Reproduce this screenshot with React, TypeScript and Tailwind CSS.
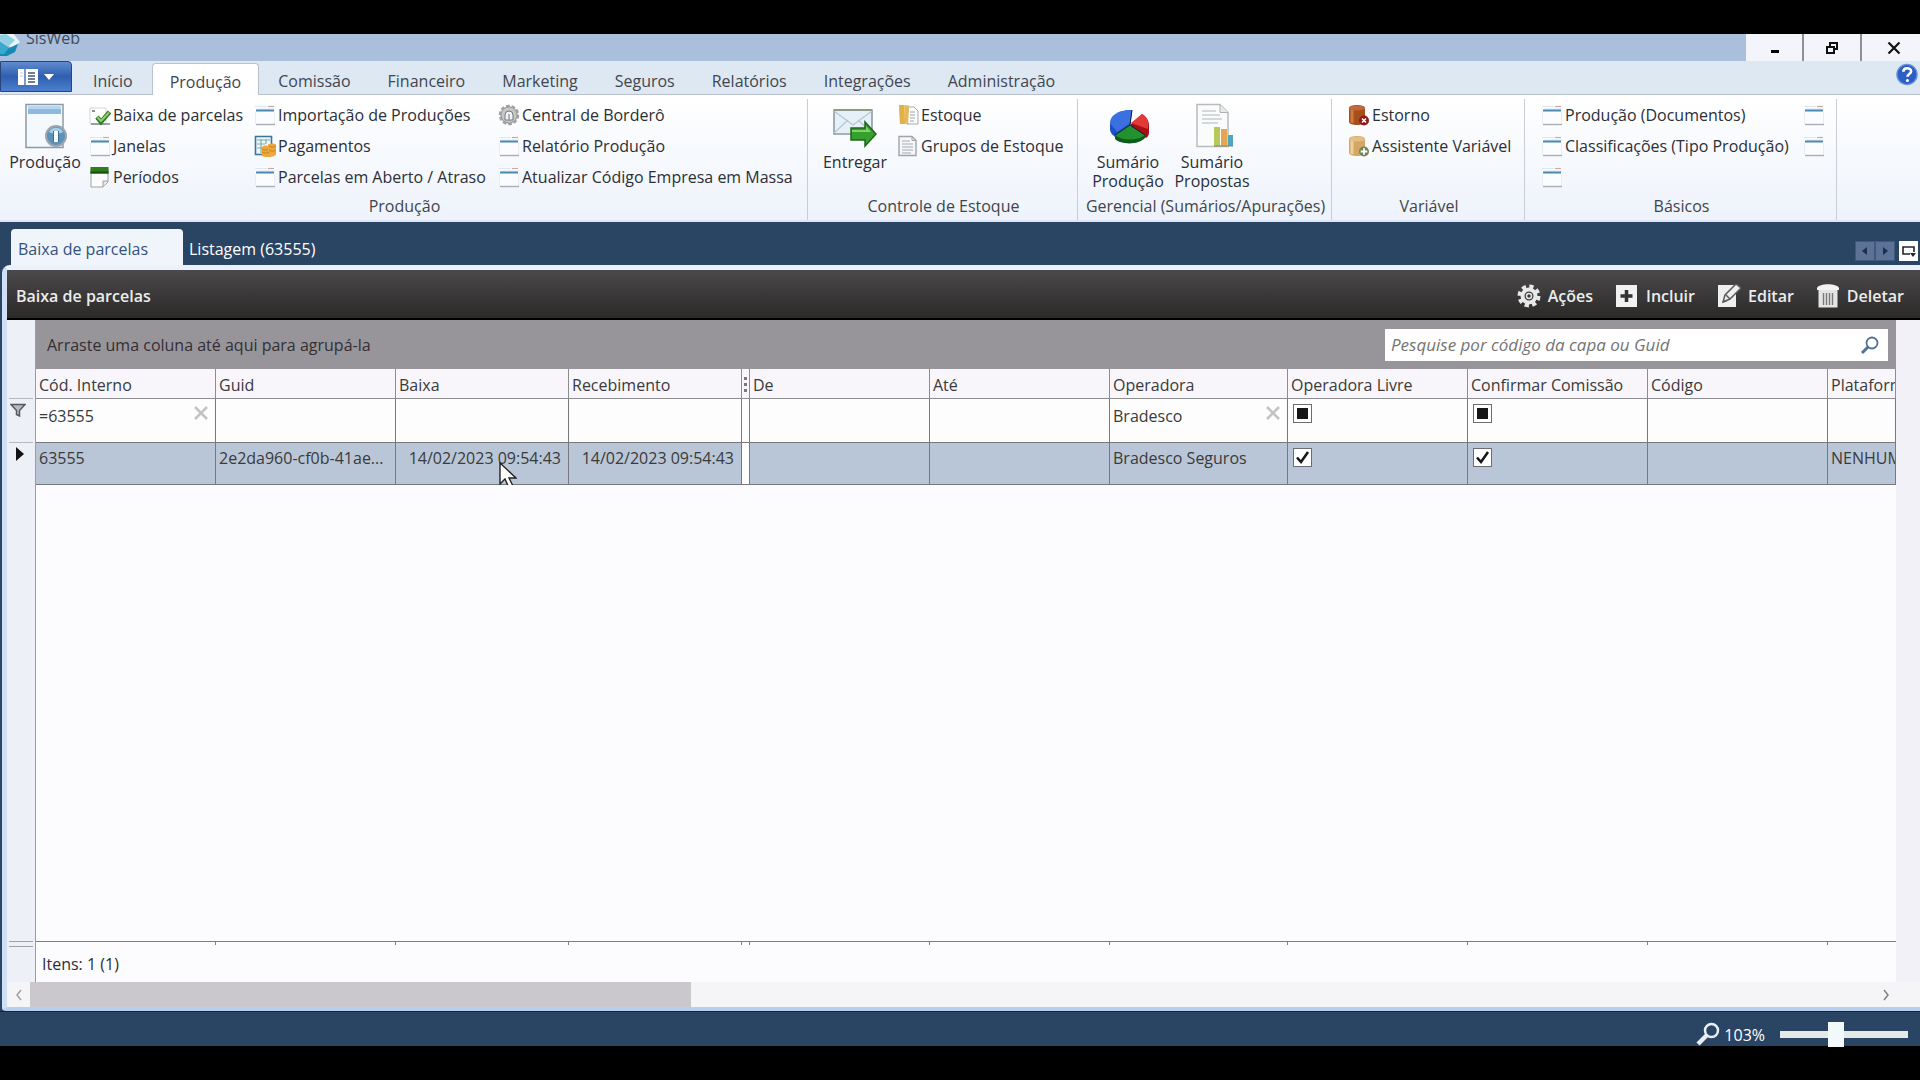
import { ReactNode, useState } from "react";

type IconName =
  | "check"
  | "window"
  | "period"
  | "payment"
  | "gear"
  | "folder"
  | "doc"
  | "dbRemove"
  | "dbAdd";

type RibbonItem = { label: string; icon: IconName };

const tabs = [
  "Início",
  "Produção",
  "Comissão",
  "Financeiro",
  "Marketing",
  "Seguros",
  "Relatórios",
  "Integrações",
  "Administração",
];

const productionA: RibbonItem[] = [
  { label: "Baixa de parcelas", icon: "check" },
  { label: "Janelas", icon: "window" },
  { label: "Períodos", icon: "period" },
];

const productionB: RibbonItem[] = [
  { label: "Importação de Produções", icon: "window" },
  { label: "Pagamentos", icon: "payment" },
  { label: "Parcelas em Aberto / Atraso", icon: "window" },
];

const productionC: RibbonItem[] = [
  { label: "Central de Borderô", icon: "gear" },
  { label: "Relatório Produção", icon: "window" },
  { label: "Atualizar Código Empresa em Massa", icon: "window" },
];

const stock: RibbonItem[] = [
  { label: "Estoque", icon: "folder" },
  { label: "Grupos de Estoque", icon: "doc" },
];

const variable: RibbonItem[] = [
  { label: "Estorno", icon: "dbRemove" },
  { label: "Assistente Variável", icon: "dbAdd" },
];

const basicsA: RibbonItem[] = [
  { label: "Produção (Documentos)", icon: "window" },
  { label: "Classificações (Tipo Produção)", icon: "window" },
  { label: "", icon: "window" },
];

const basicsB: RibbonItem[] = [
  { label: "", icon: "window" },
  { label: "", icon: "window" },
];

function SmallIcon({ name }: { name: IconName }) {
  return (
    <svg viewBox="0 0 22 22" className="h-[22px] w-[22px] shrink-0" aria-hidden="true">
      {name === "window" && (
        <>
          <path d="M1 1h20v20H1z" fill="#fbfcfe" />
          <path d="M1 2.500h12M3 5h18" stroke="#dbe6f0" strokeWidth="1" />
          <path d="M14 2.500h6" stroke="#c9a9a6" strokeWidth="1.200" />
          <path d="M2 6.500h18" stroke="#4a88b0" strokeWidth="2" />
          <path d="M1.500 8v12M20.500 8v12" stroke="#e9edf2" />
          <path d="M2 20.500h19" stroke="#a9adb5" strokeWidth="1.400" />
        </>
      )}
      {name === "check" && (
        <>
          <path d="M1 4h16v16H1z" fill="#fff" stroke="#d3d6da" />
          <path d="M3 6h3v2H3z" fill="#8c8f94" />
          <path d="M2 20h19" stroke="#7f858c" strokeWidth="1.500" />
          <path d="m8 13 4 5L20.500 8" fill="none" stroke="#2f7a24" strokeWidth="4.500" />
          <path d="m8.500 13.200 3.500 3.800 8-8.500" fill="none" stroke="#8fd06c" strokeWidth="2" />
        </>
      )}
      {name === "period" && (
        <>
          <path d="M2 3h17v13l-5 5H2z" fill="#fcfcfc" stroke="#9ba19b" />
          <path d="M1.500 1h18v6.500h-18z" fill="#2f7d1d" />
          <path d="M1.500 5.500h18v2h-18z" fill="#175010" />
          <path d="M19 15h-5v6" fill="#e8e8e8" stroke="#9ba19b" />
        </>
      )}
      {name === "payment" && (
        <>
          <path d="M1.500 1.500h16v18h-16z" fill="#eef6fc" stroke="#3b7699" strokeWidth="1.600" />
          <path d="M3 5h13M3 9h8M3 13h6M7 4v14M12 4v5" stroke="#7db0a5" strokeWidth="1.200" />
          <path d="M8 13c0-3 6-3 6-1v-2c0-2 8-2 8 0v9c0 2-4 3-7 3s-7 0-7-2z" fill="#eda73a" />
          <path d="M8 14c2 1.500 5 1.500 6 0M8 17c2 1.500 5 1.500 7 0M15 11c2 1.500 5 1.500 7 0M15 15c2 1.500 5 1.500 7 0" fill="none" stroke="#c98226" />
        </>
      )}
      {name === "gear" && (
        <>
          <circle cx="11" cy="11" r="9" fill="#d0d0d0" stroke="#a2a2a2" strokeWidth="2.500" strokeDasharray="3.600 2" />
          <circle cx="11" cy="11" r="8" fill="#c6c7c8" stroke="#9b9c9e" />
          <path d="M7 16v-5a4 4 0 0 1 8 0v5z" fill="#f2f2f2" stroke="#77787a" />
          <path d="M11 10v6" stroke="#9a9b9d" strokeWidth="1.500" />
        </>
      )}
      {name === "folder" && (
        <>
          <path d="M2 1h10v19H3z" fill="#f2cf73" />
          <path d="M2 1h5l1 19H3z" fill="#e0b24b" />
          <path d="M11 3h6l4 4v13H10z" fill="#fdfdfd" stroke="#a7a9ad" />
          <path d="M13 8h5M13 11h5M13 14h5M13 17h4" stroke="#9aa3b0" />
          <path d="m8 1 4 3-1 17-3-2z" fill="#e5b95a" />
        </>
      )}
      {name === "doc" && (
        <>
          <path d="M2 1.500h13l4 4v15H2z" fill="#f7f7f8" stroke="#a1a4a8" strokeWidth="1.400" />
          <path d="M15 1.500v4h4" fill="none" stroke="#a1a4a8" />
          <path d="M5 6h8M5 9h11M5 12h11M5 15h11M5 18h9" stroke="#a3abb5" strokeWidth="1.200" />
        </>
      )}
      {(name === "dbRemove" || name === "dbAdd") && (
        <>
          <path
            d="M1 4c0-4 16-4 16 0v14c0 4-16 4-16 0z"
            fill={name === "dbRemove" ? "#a84e1d" : "#d5a664"}
          />
          <path
            d="M4 3v16"
            stroke={name === "dbRemove" ? "#d07a3f" : "#ecd0a0"}
            strokeWidth="3"
          />
          <ellipse cx="9" cy="4" rx="8" ry="2.500" fill={name === "dbRemove" ? "#c2693a" : "#e4bf85"} />
          <circle cx="16" cy="16.500" r="5" fill={name === "dbRemove" ? "#8e1b1b" : "#72855a"} />
          {name === "dbRemove" ? (
            <path d="m14 14.500 4 4m0-4-4 4" stroke="#fff" strokeWidth="1.600" />
          ) : (
            <path d="M16 13.200v6.600M12.700 16.500h6.600" stroke="#fff" strokeWidth="1.800" />
          )}
        </>
      )}
    </svg>
  );
}

function ProductionIcon() {
  return (
    <svg viewBox="0 0 44 46" className="h-[46px] w-[44px]" aria-hidden="true">
      <path d="M3 1.500h37v43H3z" fill="#f4f9fd" stroke="#8b99a8" strokeWidth="1.500" />
      <path d="M5 4h33v7H5z" fill="#8fb9dc" />
      <path d="M5 3h33v3H5z" fill="#b9d6ec" />
      <circle cx="33" cy="33" r="10" fill="#5d92b8" stroke="#9aa5b1" strokeWidth="2" />
      <path d="M26 29a8 8 0 0 1 14 0c-3 2-11 2-14 0z" fill="#a7cde4" />
      <path d="M33 28v11" stroke="#fff" strokeWidth="4" />
      <path d="M30.500 28v11M35.500 28v11" stroke="#3a6c92" strokeWidth="1" />
    </svg>
  );
}

function DeliverIcon() {
  return (
    <svg viewBox="0 0 44 46" className="h-[46px] w-[44px]" aria-hidden="true">
      <path d="M1 7h38v24H1z" fill="#e6f0f8" stroke="#8d9ba8" strokeWidth="1.600" />
      <path d="m1 30 14-13M39 30 25 17M1 8l19 14L39 8" fill="none" stroke="#b5c6d3" strokeWidth="1.200" />
      <path d="M1 7h38" stroke="#8e9a86" strokeWidth="2" />
      <path d="M18 25h14v-6l11 12-11 12v-6H18z" fill="#37a02c" stroke="#1d661a" strokeWidth="1.500" />
      <path d="M19 27h14v-4l5 6H19z" fill="#7fd264" />
    </svg>
  );
}

function PieIcon() {
  return (
    <svg viewBox="0 0 44 46" className="h-[46px] w-[44px]" aria-hidden="true">
      <path d="M4 22c0-7 7-15 22-15l-2 17-13 11c-4-2-7-5-7-9z" fill="#1e4fc4" />
      <path d="M4 20c0-7 7-13 22-13l-2 13-13 9z" fill="#3a70e0" />
      <path d="M25 21 36 11c5 3 7 7 7 12v6c0 3-1 5-3 6l-15-9z" fill="#a80f14" />
      <path d="M25 20 36 11c5 3 7 7 6 15z" fill="#e23a36" />
      <path d="m9 33 14-10 16 10v2c-6 7-24 7-30 1z" fill="#0d5c1b" />
      <path d="m9 32 14-10 16 10c-7 6-23 6-30 0z" fill="#22922f" />
      <path d="m26 7-2 15 15 10M24 22 9 32" fill="none" stroke="#0b1c3d" strokeWidth="1" />
    </svg>
  );
}

function ReportIcon() {
  return (
    <svg viewBox="0 0 44 46" className="h-[46px] w-[44px]" aria-hidden="true">
      <path d="M7 1.500h23l8 8v34H7z" fill="#fafbfb" stroke="#b9bcbf" strokeWidth="1.500" />
      <path d="M30 1.500v8h8" fill="#e8eaeb" stroke="#adb1b4" />
      <path d="M12 8h14M12 12h18M12 16h20M12 20h16" stroke="#c9cdcf" strokeWidth="1.500" />
      <path d="M24 24h6v19h-6z" fill="#b8c957" />
      <path d="M31 26h6v17h-6z" fill="#e5a654" />
      <path d="M38 32h5v11h-5z" fill="#4fa6bf" />
      <path d="M24 43h19" stroke="#7d8a5c" />
    </svg>
  );
}

function RibbonList({ items, className }: { items: RibbonItem[]; className?: string }) {
  return (
    <div className={`flex flex-col ${className ?? ""}`}>
      {items.map(({ label, icon }, index) => (
        <button
          key={index}
          type="button"
          aria-label={label || "Cadastro"}
          className="flex h-[31px] items-center gap-0.5 whitespace-nowrap hover:bg-sky-100"
        >
          <SmallIcon name={icon} />
          {label && <span>{label}</span>}
        </button>
      ))}
    </div>
  );
}

function BigButton({ icon, children }: { icon: ReactNode; children: ReactNode }) {
  return (
    <button
      type="button"
      className="flex w-[84px] flex-col items-center self-start pt-1 leading-[19px] hover:bg-sky-100"
    >
      {icon}
      <span className="mt-1">{children}</span>
    </button>
  );
}

function RibbonGroup({
  title,
  className,
  children,
}: {
  title: string;
  className: string;
  children: ReactNode;
}) {
  return (
    <section className={`mt-1 flex shrink-0 flex-col border-r border-[#c9ced6] ${className}`}>
      <div className="flex h-[93px] shrink-0">{children}</div>
      <h2 className="pl-0.5 text-center leading-7 text-[#40454d]">{title}</h2>
    </section>
  );
}

const headCell =
  "h-[30px] border-r border-b border-[#8b8d90] px-[3px] pt-0.5 text-left font-normal whitespace-nowrap overflow-hidden";
const filterCell = "h-[44px] border-r border-b border-[#77797c] p-0 align-top";
const bodyCell =
  "h-[42px] border-r border-b border-[#77797c] pl-[3px] pb-3 whitespace-nowrap overflow-hidden";

const columns = [
  { title: "Cód. Interno", filter: "=63555", value: "63555", width: "w-[180px]" },
  { title: "Guid", filter: "", value: "2e2da960-cf0b-41ae...", width: "w-[180px]" },
  { title: "Baixa", filter: "", value: "14/02/2023 09:54:43", width: "w-[173px]", right: true },
  { title: "Recebimento", filter: "", value: "14/02/2023 09:54:43", width: "w-[173px]", right: true },
  { title: "", splitter: true, width: "w-[8px]" },
  { title: "De", filter: "", value: "", width: "w-[180px]" },
  { title: "Até", filter: "", value: "", width: "w-[180px]" },
  { title: "Operadora", filter: "Bradesco", value: "Bradesco Seguros", width: "w-[178px]" },
  { title: "Operadora Livre", check: true, width: "w-[180px]" },
  { title: "Confirmar Comissão", check: true, width: "w-[180px]" },
  { title: "Código", filter: "", value: "", width: "w-[180px]" },
  { title: "Plataforma", filter: "", value: "NENHUMA", width: "w-auto" },
];

function CheckBox({ label, mixed }: { label: string; mixed?: boolean }) {
  const [checked, setChecked] = useState(true);
  return (
    <label className="relative block h-[19px] w-[19px]">
      <input
        type="checkbox"
        aria-label={label}
        checked={checked}
        onChange={() => setChecked(!checked)}
        className="block h-[19px] w-[19px] appearance-none border border-[#6b6d70] bg-white"
      />
      {checked && (
        <svg viewBox="0 0 19 19" className="pointer-events-none absolute inset-0" aria-hidden="true">
          {mixed ? (
            <path d="M4 4h11v11H4z" fill="#161616" />
          ) : (
            <path d="m4 9.500 4 4.500 7-10" fill="none" stroke="#161616" strokeWidth="2.500" />
          )}
        </svg>
      )}
    </label>
  );
}

function DataGrid() {
  return (
    <table className="w-full table-fixed border-separate border-spacing-0 text-[#3a3a3a]">
      <colgroup>
        {columns.map((col, i) => (
          <col key={i} className={col.width} />
        ))}
      </colgroup>
      <thead>
        <tr className="bg-[#f8f6fa]">
          {columns.map((col, i) =>
            col.splitter ? (
              <th key={i} className="border-r border-b border-[#8b8d90] p-0">
                <svg viewBox="0 0 7 20" className="h-5 w-[7px]" aria-hidden="true">
                  <path d="M2 3h3v3H2zM2 9h3v3H2zM2 15h3v3H2z" fill="#77787b" />
                </svg>
              </th>
            ) : (
              <th key={i} className={headCell}>
                {col.title}
              </th>
            ),
          )}
        </tr>
      </thead>
      <tbody>
        <tr className="bg-[#fdfdfe]">
          {columns.map((col, i) => (
            <td key={i} className={filterCell}>
              {col.check && (
                <div className="px-[5px] pt-[5px]">
                  <CheckBox label={`Filtrar ${col.title}`} mixed />
                </div>
              )}
              {!col.check && !col.splitter && (
                <div className="flex items-center px-[3px] pt-[5px]">
                  <input
                    type="text"
                    aria-label={`Filtrar ${col.title}`}
                    defaultValue={col.filter}
                    className="h-6 w-full min-w-0 bg-transparent outline-none"
                  />
                  {col.filter && (
                    <button type="button" aria-label="Limpar filtro" className="mr-[3px] mb-[6px] shrink-0">
                      <svg viewBox="0 0 16 16" className="h-4 w-4" aria-hidden="true">
                        <path d="m2 2 12 12M14 2 2 14" stroke="#c3c3c3" strokeWidth="2.500" />
                      </svg>
                    </button>
                  )}
                </div>
              )}
            </td>
          ))}
        </tr>
        <tr className="bg-[#b9c6d7]">
          {columns.map((col, i) => {
            if (col.splitter) return <td key={i} className="border-r border-b border-[#77797c] bg-white p-0" />;
            if (col.check)
              return (
                <td key={i} className="border-r border-b border-[#77797c] px-[5px] pb-3">
                  <CheckBox label={col.title} />
                </td>
              );
            return (
              <td key={i} className={`${bodyCell} ${col.right ? "pr-[7px] text-right" : ""}`}>
                {col.value}
              </td>
            );
          })}
        </tr>
      </tbody>
    </table>
  );
}

const actions = [
  {
    label: "Ações",
    icon: (
      <>
        <circle cx="12" cy="12" r="9.500" fill="none" stroke="#e8e8e8" strokeWidth="4" strokeDasharray="4.200 3.260" />
        <circle cx="12" cy="12" r="6.500" fill="none" stroke="#e8e8e8" strokeWidth="4" />
        <circle cx="12" cy="12" r="2.500" fill="none" stroke="#e8e8e8" strokeWidth="1.500" />
      </>
    ),
  },
  {
    label: "Incluir",
    icon: (
      <>
        <path d="M1 1h21v22H1z" fill="#f1f1f1" />
        <path d="M11.500 6v12M5.500 12h12" stroke="#333" strokeWidth="3.500" />
      </>
    ),
  },
  {
    label: "Editar",
    icon: (
      <>
        <path d="M1 1h18v22H1z" fill="#efefef" />
        <path d="m6 18 2-7L19 0l5 4-11 11z" fill="#efefef" stroke="#5c5c5c" strokeWidth="1.500" />
        <path d="m9 11 4 4M6 18l4-1.500" stroke="#5c5c5c" strokeWidth="1.500" />
      </>
    ),
  },
  {
    label: "Deletar",
    icon: (
      <>
        <path d="M1 4c2-5 20-5 22 0v2H1z" fill="#f3f3f3" />
        <path d="M2.500 6h19v17.500h-19z" fill="#e4e4e4" />
        <path d="M7.500 9v12M10.500 9v12M13.500 9v12M16.500 9v12" stroke="#77797b" strokeWidth="1.400" />
      </>
    ),
  },
];

export default function App() {
  const [zoom, setZoom] = useState(43);

  return (
    <div className="flex min-h-screen flex-col overflow-hidden bg-black py-[34px] font-['Open_Sans',sans-serif] text-base text-[#2b2f36]">
      <header className="flex h-[27px] items-start justify-between overflow-hidden bg-[#a9bfdb]">
        <div className="-mt-2 flex items-start gap-1">
          <svg viewBox="0 0 22 30" className="h-[30px] w-[22px]" aria-hidden="true">
            <path d="M0 6h12l8 10-8 6L0 14z" fill="#e8f6f8" />
            <path d="M0 9l6-1 9 6-6 6L0 14z" fill="#8fd0e2" />
            <path d="m0 16 9 6 9-4-3 8-8 4H0z" fill="#1789b5" />
            <path d="m0 16 9 6-5 6H0z" fill="#3aa9d0" />
          </svg>
          <h1 className="leading-6 text-[#3f4a5a]">SisWeb</h1>
        </div>
        <div className="flex h-full bg-[#f3f5fa] text-black">
          <button type="button" aria-label="Minimizar" className="flex w-[58px] items-center justify-center border-r-2 border-[#8d9098]">
            <svg viewBox="0 0 12 12" className="h-3 w-3" aria-hidden="true">
              <path d="M3 8h8v3H3z" />
            </svg>
          </button>
          <button type="button" aria-label="Restaurar" className="flex w-[58px] items-center justify-center border-r-2 border-[#8d9098]">
            <svg viewBox="0 0 14 14" className="h-3.5 w-3.5" fill="none" stroke="#111" strokeWidth="2" aria-hidden="true">
              <path d="M2 6h7v6H2zM5 6V2h7v6H9" />
            </svg>
          </button>
          <button type="button" aria-label="Fechar" className="flex w-[58px] items-center justify-center">
            <svg viewBox="0 0 14 14" className="ml-1.5 h-3.5 w-3.5" aria-hidden="true">
              <path d="m1.500 1.500 11 11m0-11-11 11" stroke="#111" strokeWidth="2.200" />
            </svg>
          </button>
        </div>
      </header>

      <nav className="flex h-[34px] items-stretch gap-px border-b border-[#b9c2ce] bg-[#dde8f3]">
        <button
          type="button"
          aria-label="Menu do aplicativo"
          className="mr-0.5 flex h-[31px] w-[72px] items-center justify-center gap-1 rounded-tr border border-[#27447c] bg-linear-to-b from-[#5f8bd0] via-[#2f5fae] to-[#4c80cf]"
        >
          <svg viewBox="0 0 22 18" className="h-[18px] w-[22px]" aria-hidden="true">
            <path d="M1 1h20v16H1z" fill="#fff" />
            <path d="M8 1v16" stroke="#5876a8" strokeWidth="1.500" />
            <path d="M11 5h7M11 8h7M11 11h7M11 14h7" stroke="#41556f" strokeWidth="1.400" />
            <path d="M3 5h3M3 8h3" stroke="#b8cbe5" />
          </svg>
          <svg viewBox="0 0 12 8" className="h-2 w-3" aria-hidden="true">
            <path d="M1 1h10L6 7z" fill="#fff" />
          </svg>
        </button>
        {tabs.map((tab) => (
          <button
            key={tab}
            type="button"
            className={`mt-0.5 -mb-px px-[17px] pt-1 leading-6 text-[#3f4650] ${
              tab === "Produção" ? "rounded-t border-x border-t border-[#b9c2ce] bg-white" : "border border-transparent"
            }`}
          >
            {tab}
          </button>
        ))}
        <button type="button" aria-label="Ajuda" className="mt-0.5 mr-0.5 ml-auto self-start">
          <svg viewBox="0 0 24 24" className="h-[23px] w-[22px]" aria-hidden="true">
            <circle cx="12" cy="12" r="11" fill="#2c5fc6" stroke="#6d93dc" strokeWidth="1.500" />
            <path d="M8 9c0-5 8.500-5 8.500-.500 0 3-4 3-4 6" fill="none" stroke="#fff" strokeWidth="2.800" />
            <circle cx="12.500" cy="18.500" r="1.700" fill="#fff" />
          </svg>
        </button>
      </nav>

      <div className="flex h-[127px] overflow-hidden border-b-2 border-[#dfe5f5] bg-linear-to-b from-white to-[#eef3fb]">
        <RibbonGroup title="Produção" className="w-[808px]">
          <div className="w-[3px]" />
          <BigButton icon={<ProductionIcon />}>Produção</BigButton>
          <RibbonList items={productionA} className="ml-0.5 w-[165px]" />
          <RibbonList items={productionB} className="w-[244px]" />
          <RibbonList items={productionC} />
        </RibbonGroup>
        <RibbonGroup title="Controle de Estoque" className="w-[270px]">
          <div className="w-[5px]" />
          <BigButton icon={<DeliverIcon />}>Entregar</BigButton>
          <RibbonList items={stock} />
        </RibbonGroup>
        <RibbonGroup title="Gerencial (Sumários/Apurações)" className="w-[254px]">
          <div className="w-2" />
          <BigButton icon={<PieIcon />}>
            Sumário
            <br />
            Produção
          </BigButton>
          <BigButton icon={<ReportIcon />}>
            Sumário
            <br />
            Propostas
          </BigButton>
        </RibbonGroup>
        <RibbonGroup title="Variável" className="w-[193px]">
          <RibbonList items={variable} className="pl-4" />
        </RibbonGroup>
        <RibbonGroup title="Básicos" className="w-[312px]">
          <RibbonList items={basicsA} className="w-[278px] pl-4" />
          <RibbonList items={basicsB} />
        </RibbonGroup>
      </div>

      <main className="flex grow flex-col bg-[#2a4464]">
        <div className="flex h-[43px] items-end pt-[7px] pl-[11px]">
          <button type="button" className="h-[36px] w-[172px] rounded-t bg-[#f0f5fc] pt-1 pl-[7px] text-left text-[#33527a]">
            Baixa de parcelas
          </button>
          <button type="button" className="h-[36px] px-1.5 pt-1 font-medium text-white">
            Listagem (63555)
          </button>
          <div className="mb-1 ml-auto flex pr-0.5">
            <button type="button" aria-label="Aba anterior" className="h-5 w-5 border border-[#41597d] bg-[#5c7397]">
              <svg viewBox="0 0 18 18" aria-hidden="true">
                <path d="M11 5v8L6 9z" fill="#1d2f4b" />
              </svg>
            </button>
            <button type="button" aria-label="Próxima aba" className="h-5 w-5 border border-[#41597d] bg-[#5c7397]">
              <svg viewBox="0 0 18 18" aria-hidden="true">
                <path d="M7 5v8l5-4z" fill="#1d2f4b" />
              </svg>
            </button>
            <button type="button" aria-label="Lista de abas" className="ml-1 h-5 w-[19px] bg-white">
              <svg viewBox="0 0 19 20" aria-hidden="true">
                <path d="M11 13H4V6h11v5" fill="none" stroke="#20242b" strokeWidth="1.600" />
                <path d="M11 12h6l-3 4z" fill="#20242b" />
              </svg>
            </button>
          </div>
        </div>

        <section className="ml-0.5 flex grow flex-col rounded-tl-lg rounded-bl border-t-[5px] border-b-4 border-l-[5px] border-t-[#e9f2fc] border-b-[#b9cfee] border-l-[#cfe0f6] bg-white">
          <div className="flex h-[50px] items-center justify-between border-b-2 border-black bg-linear-to-b from-[#4b494b] to-[#2b2a29] pt-1 pr-4 pl-[9px] font-semibold text-[#ececec]">
            <h2>Baixa de parcelas</h2>
            <div className="flex gap-[22px]">
              {actions.map(({ label, icon }) => (
                <button key={label} type="button" className="flex items-center gap-[7px]">
                  <svg viewBox="0 0 24 24" className="h-6 w-6" aria-hidden="true">
                    {icon}
                  </svg>
                  {label}
                </button>
              ))}
            </div>
          </div>

          <div className="flex grow">
            <div className="flex w-[29px] shrink-0 flex-col border-r border-[#9a9ca0] bg-[#eef0f7] px-0.5">
              <div className="h-[79px] border-b border-[#b5b8bf]" />
              <div className="h-[44px] border-b border-[#b5b8bf] pt-1 pl-px">
                <svg viewBox="0 0 16 14" className="h-3.5 w-4" aria-hidden="true">
                  <path d="M1 1.500h14L9.500 7.500V13l-3-1.500v-4z" fill="#b9bcc1" stroke="#55585d" strokeWidth="1.500" />
                </svg>
              </div>
              <div className="pt-1 pl-[7px]">
                <svg viewBox="0 0 8 14" className="h-3.5 w-2" aria-hidden="true">
                  <path d="m0 0 8 7-8 7z" fill="#111" />
                </svg>
              </div>
              <div className="mt-auto mb-[35px] h-[6px] border-y border-[#9fa2a8]" />
            </div>

            <div className="flex min-w-0 grow flex-col">
              <div className="flex h-[49px] items-center justify-between bg-[#98959a] pr-2 pl-[11px]">
                <span className="text-[#322f33]">Arraste uma coluna até aqui para agrupá-la</span>
                <div className="flex h-8 w-[503px] items-center bg-white pr-2 pl-1.5">
                  <input
                    type="search"
                    aria-label="Pesquisar"
                    placeholder="Pesquise por código da capa ou Guid"
                    className="grow text-[17px] font-medium italic outline-none placeholder:text-[#747474]"
                  />
                  <svg viewBox="0 0 20 20" className="h-5 w-5" fill="none" stroke="#4f7299" aria-hidden="true">
                    <circle cx="12" cy="8" r="5.500" strokeWidth="1.800" />
                    <path d="m8 12-6 6" strokeWidth="3" />
                  </svg>
                </div>
              </div>
              <div className="relative overflow-hidden">
                <DataGrid />
                <svg viewBox="0 0 18 28" className="absolute top-[93px] left-[463px] h-7 w-[18px]" aria-hidden="true">
                  <path d="M1 1v21l5-5 4 9 4-2-4-8h7z" fill="#fff" stroke="#222" strokeWidth="1.400" />
                </svg>
              </div>
              <div className="grow bg-[#fcfcfe]" />
              <div className="border-t border-[#7c7e82] bg-[#fcfcfe]">
                <div className="flex">
                  {columns.map((col, i) => (
                    <div key={i} className={`h-[3px] shrink-0 border-r border-[#7c7e82] last:border-0 ${col.width}`} />
                  ))}
                </div>
                <p className="h-[37px] pl-1.5 leading-[38px]">Itens: 1 (1)</p>
              </div>
            </div>

            <div className="w-6 shrink-0 bg-[#f3f1f8]" />
          </div>

          <div className="flex h-[25px] items-center bg-[#f5f4f6] pr-[30px]">
            <button type="button" aria-label="Rolar para a esquerda" className="flex w-[23px] justify-center">
              <svg viewBox="0 0 8 12" className="h-3 w-2" fill="none" stroke="#a0a0a4" strokeWidth="1.500" aria-hidden="true">
                <path d="M6 1 2 6l4 5" />
              </svg>
            </button>
            <div className="h-full grow">
              <div className="h-full w-[35.700%] bg-[#cbc8cd]" />
            </div>
            <button type="button" aria-label="Rolar para a direita">
              <svg viewBox="0 0 8 12" className="h-3 w-2" fill="none" stroke="#808084" strokeWidth="1.500" aria-hidden="true">
                <path d="m2 1 4 5-4 5" />
              </svg>
            </button>
          </div>
        </section>

        <footer className="flex h-[35px] items-end justify-end border-t border-[#14233a] pr-3 text-white">
          <svg viewBox="0 0 24 24" className="h-6 w-6" fill="none" stroke="#e9eef5" aria-hidden="true">
            <circle cx="15.500" cy="8.500" r="6.500" strokeWidth="2.500" />
            <path d="m11 13-9 9" strokeWidth="4.500" />
          </svg>
          <label htmlFor="zoom" className="mr-[15px] ml-1 leading-[22px]">
            103%
          </label>
          <input
            id="zoom"
            type="range"
            min="0"
            max="100"
            value={zoom}
            onChange={(e) => setZoom(Number(e.target.value))}
            className="h-6 w-32 appearance-none bg-transparent [&::-webkit-slider-runnable-track]:h-[7px] [&::-webkit-slider-runnable-track]:bg-[#e4e8e6] [&::-webkit-slider-thumb]:-mt-[9px] [&::-webkit-slider-thumb]:h-[25px] [&::-webkit-slider-thumb]:w-4 [&::-webkit-slider-thumb]:appearance-none [&::-webkit-slider-thumb]:bg-[#f3f8fb]"
          />
        </footer>
      </main>
    </div>
  );
}
